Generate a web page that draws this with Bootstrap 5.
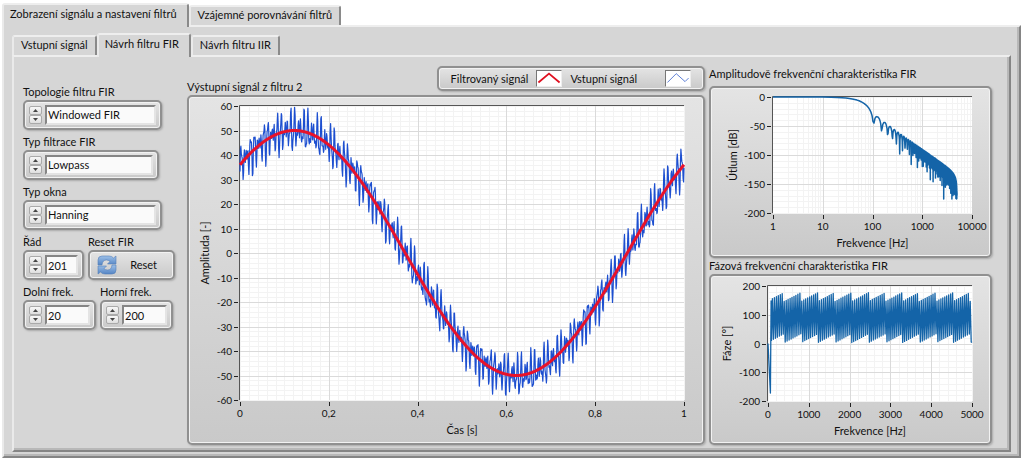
<!DOCTYPE html>
<html lang="cs">
<head>
<meta charset="utf-8">
<meta name="viewport" content="width=device-width, initial-scale=1">
<title>Filtry FIR a IIR</title>
<link rel="stylesheet" href="https://cdn.jsdelivr.net/npm/bootstrap@5.3.0/dist/css/bootstrap.min.css">
<style>
body{font:11px/16px Lato,"Noto Sans",sans-serif;color:#111;background:#fff}
.app-frame,.inner-frame{background:#d6d6d6;border:2px solid;border-color:#eee #858585 #858585 #eaeaea;box-shadow:inset -2px -2px #b8b8b8}
.app-frame{margin:0 2px 1px}
.inner-frame{margin:0 8px 4px 8px;padding:9px 17px 5px 9px}
.panel-tabs{padding:3px 2px 0}
.inner-tabs{padding:6px 8px 0}
.panel-tab{border:2px solid;border-color:#eee #8a8a8a transparent #eaeaea;border-bottom:0;background:#d6d6d6;border-radius:3px 3px 0 0;padding:0 7px 2px;height:20px;white-space:nowrap;color:#111;line-height:16px}
.panel-tab.active{height:24px;margin-bottom:-2px;position:relative;padding:0 10px 5px 6px}
.controls-col{width:164px;padding-top:18px;row-gap:4px}
.side-col{width:283px}
.signal-col{min-width:0}
.bevel{border:2px solid #909090;border-radius:5px;background:linear-gradient(#e4e4e4,#c9c9c9);box-shadow:inset 0 0 0 1px #f2f2f2,1px 1px 2px #aaa}
.chart-card{flex:1 1 0;min-height:165px}
.pick{height:30px;padding:3px 4px;column-gap:3px}
.pick-wide{width:139px}
.pick-mid{width:136px}
.pick-num{width:73px}
.pick-order{width:61px}
.spin-btn{width:13px;height:9px;border:1px solid #aaa;border-radius:2px;background:linear-gradient(#f8f8f8,#dedede)}
.spin-btn svg{width:5px;height:3px}
.value-box{border:2px solid;border-color:#858585 #e4e4e4 #e4e4e4 #858585;background:#fafafa;min-width:0;width:100%;height:20px;line-height:16px;padding:0 1px;appearance:none;border-radius:0;color:#111}
.reset-btn{height:30px;width:87px;padding:0 16px 0 6px;color:#111}
.legend-bar{height:25px;padding:0 12px}
.legend-key{width:26px;height:17px;background:#fff;border:1px solid;border-color:#777 #eee #eee #777}
.plot-box{overflow:hidden;min-width:0}
.plot-box svg{display:block}
.plot-box text{font-size:11px;fill:#111}
.plot-box .tick-text{font-size:10px}
.curve{fill:none;stroke-linejoin:round}
</style>
</head>
<body class="min-vh-100 d-flex flex-column">
<nav class="panel-tabs d-flex align-items-end" aria-label="Hlavní záložky">
<button type="button" class="panel-tab active">Zobrazení signálu a nastavení filtrů</button>
<button type="button" class="panel-tab">Vzájemné porovnávání filtrů</button>
</nav>
<main class="app-frame flex-fill d-flex flex-column">
<nav class="inner-tabs d-flex align-items-end" aria-label="Záložky filtru">
<button type="button" class="panel-tab">Vstupní signál</button>
<button type="button" class="panel-tab active">Návrh filtru FIR</button>
<button type="button" class="panel-tab">Návrh filtru IIR</button>
</nav>
<div class="inner-frame flex-fill d-flex">
<form class="controls-col flex-shrink-0 d-flex flex-column">
  <div>
    <label class="d-block" for="topology">Topologie filtru FIR</label>
    <div class="bevel pick pick-wide d-flex align-items-center" data-spin>
      <select class="value-box" id="topology"><option>Windowed FIR</option></select>
    </div>
  </div>
  <div>
    <label class="d-block" for="kind">Typ filtrace FIR</label>
    <div class="bevel pick pick-mid d-flex align-items-center" data-spin>
      <select class="value-box" id="kind"><option>Lowpass</option></select>
    </div>
  </div>
  <div>
    <label class="d-block" for="win">Typ okna</label>
    <div class="bevel pick pick-wide d-flex align-items-center" data-spin>
      <select class="value-box" id="win"><option>Hanning</option></select>
    </div>
  </div>
  <div class="d-flex">
    <div class="me-1">
      <label class="d-block" for="order">Řád</label>
      <div class="bevel pick pick-order d-flex align-items-center" data-spin>
        <input class="value-box" id="order" type="text" value="201">
      </div>
    </div>
    <div>
      <label class="d-block" for="reset">Reset FIR</label>
      <button type="button" class="bevel reset-btn d-flex align-items-center justify-content-between" id="reset">
        <svg width="22" height="20" viewBox="0 0 22 20" aria-hidden="true">
          <defs><linearGradient id="blue" x2="0" y2="1"><stop stop-color="#9dc0e8"/><stop offset="1" stop-color="#5585c4"/></linearGradient></defs>
          <path d="M2 10V5Q2 1 6 1H13Q16 1 17.500 3L20 1V9H11.500L14 6.500Q12.500 5 10.500 5Q6.500 5 6 10Z" fill="url(#blue)" stroke="#5580b8" stroke-width=".6"/>
          <path d="M20 10V15Q20 19 16 19H9Q6 19 4.500 17L2 19V11H10.500L8 13.500Q9.500 15 11.500 15Q15.500 15 16 10Z" fill="url(#blue)" stroke="#5580b8" stroke-width=".6"/>
        </svg>
        <span>Reset</span>
      </button>
    </div>
  </div>
  <div class="d-flex gap-1">
    <div>
      <label class="d-block" for="low">Dolní frek.</label>
      <div class="bevel pick pick-num d-flex align-items-center" data-spin>
        <input class="value-box" id="low" type="text" value="20">
      </div>
    </div>
    <div>
      <label class="d-block" for="high">Horní frek.</label>
      <div class="bevel pick pick-num d-flex align-items-center" data-spin>
        <input class="value-box" id="high" type="text" value="200">
      </div>
    </div>
  </div>
</form>
<section class="signal-col flex-fill d-flex flex-column">
  <div class="d-flex align-items-end justify-content-between">
    <span>Výstupní signál z filtru 2</span>
    <div class="bevel legend-bar d-flex align-items-center mb-1">
      <span>Filtrovaný signál</span>
      <svg class="legend-key mx-2" viewBox="0 0 26 17" aria-hidden="true"><path d="M1 13 13 3 25 13" fill="none" stroke="#e01020" stroke-width="2"/></svg>
      <span class="me-1">Vstupní signál</span>
      <svg class="legend-key ms-4" viewBox="0 0 26 17" aria-hidden="true"><path d="M1 13 11 3 21 12 25 8" fill="none" stroke="#4a6fd0"/></svg>
    </div>
  </div>
  <div class="bevel chart-card d-flex"><div class="plot-box flex-fill" id="signal"></div></div>
</section>
<section class="side-col flex-shrink-0 d-flex flex-column ms-1">
  <span>Amplitudově frekvenční charakteristika FIR</span>
  <div class="bevel chart-card d-flex mt-1"><div class="plot-box flex-fill" id="gain"></div></div>
  <span>Fázová frekvenční charakteristika FIR</span>
  <div class="bevel chart-card d-flex"><div class="plot-box flex-fill" id="phase"></div></div>
</section>
</div>
</main>
<script src="https://cdn.jsdelivr.net/npm/bootstrap@5.3.0/dist/js/bootstrap.bundle.min.js"></script>
<script>
document.querySelectorAll('[data-spin]').forEach(box => {
  const arrow = (d, name) => `<button type="button" class="spin-btn p-0 d-flex align-items-center justify-content-center" aria-label="${name}"><svg viewBox="0 0 5 3"><path d="${d}" fill="#444"/></svg></button>`;
  box.insertAdjacentHTML('afterbegin', `<div class="d-flex flex-column">${arrow('M0 3 2.500 0 5 3Z', 'Zvýšit')}${arrow('M0 0 2.500 3 5 0Z', 'Snížit')}</div>`);
});

const range = (a, b, s) => Array.from({length: Math.round((b - a) / s) + 1}, (_, i) => a + i * s);

// Signal: one sine period, plus a ripple made of two close tones and a faster one
const clean = t => 50 * Math.sin(2 * Math.PI * t + 0.804);
const noisy = t => clean(t) - 8 * Math.cos(2 * Math.PI * 116.5 * (t - .1185)) * Math.cos(2 * Math.PI * 16.65 * (t - .1185)) + 3 * Math.sin(2 * Math.PI * 237 * t);
const times = range(0, 1, 0.001);

// Magnitude of a 201-tap Hann-windowed low-pass at 10 kHz sampling
const taps = range(-100, 100, 1).map(n => (n ? Math.sin(2 * Math.PI * n * .002) / (Math.PI * n) : .004) * (.5 + .5 * Math.cos(Math.PI * n / 100)));
const total = taps.reduce((a, b) => a + b);
const gain = [[1, 0]].concat(range(1, 1023, 1).map(k => {
  const f = k * 10000 / 2048;
  const h = taps.reduce((a, c, i) => a + c * Math.cos(2 * Math.PI * f / 10000 * (i - 100)), 0) / total;
  return [f, Math.max(-176, 20 * Math.log10(Math.abs(h) + 1e-12))];
}));

// Wrapped phase: fast swings whose limits climb in blocks of about 414 Hz
const phase = [[0, 0], [60, -172], [75, 148]];
for (let i = 0, f = 85; f < 4990; f += 24, i++) {
  const block = ((f + 20) % 414) / 414;
  phase.push([f, (i % 2 ? 146 : 3) + 31 * block]);
}
phase.push([5000, 3]);

const charts = [
  {id: 'signal', pad: [9, 19, 43, 51], x: [0, 1], y: [-60, 60], xt: range(0, 1, .2), yt: range(-60, 60, 10), xm: range(0, 1, .02), ym: range(-60, 60, 2),
   xl: 'Čas [s]', yl: 'Amplituda [-]', ylx: 20, fmt: v => String(Math.round(v * 10) / 10).replace('.', ','),
   curves: [['#1d4fd0', 1.200, times.map(t => [t, noisy(t)])], ['#e8122a', 3, times.map(t => [t, clean(t)])]]},
  {id: 'gain', pad: [9, 18, 43, 62], x: [1, 10000], y: [-200, 0], log: true, xt: [1, 10, 100, 1000, 10000], yt: range(-200, 0, 50),
   xm: [1, 10, 100, 1000].flatMap(d => range(2, 9, 1).map(k => k * d)), ym: range(-200, 0, 10), xl: 'Frekvence [Hz]', yl: 'Útlum [dB]', ylx: 26, fmt: String,
   curves: [['#1464a8', 1.500, gain]]},
  {id: 'phase', pad: [10, 18, 43, 57], x: [0, 5000], y: [-200, 200], xt: range(0, 5000, 1000), yt: range(-200, 200, 100), xm: range(0, 5000, 200), ym: range(-200, 200, 20),
   xl: 'Frekvence [Hz]', yl: 'Fáze [°]', ylx: 20, fmt: String, curves: [['#1464a8', 1.300, phase]]}
];

function draw(c) {
  const box = document.getElementById(c.id), W = box.clientWidth, H = box.clientHeight;
  const [t, r, b, l] = c.pad, s = v => c.log ? Math.log10(v) : v;
  const X = v => l + (s(v) - s(c.x[0])) / (s(c.x[1]) - s(c.x[0])) * (W - l - r);
  const Y = v => t + (c.y[1] - v) / (c.y[1] - c.y[0]) * (H - t - b);
  const px = v => Math.round(v) + .5, bot = H - b, right = W - r;
  const vline = (v, col) => `<path d="M${px(X(v))} ${t}V${bot}" stroke="${col}"/>`;
  const hline = (v, col) => `<path d="M${l} ${px(Y(v))}H${right}" stroke="${col}"/>`;
  let o = `<rect x="${l}" y="${t}" width="${right - l}" height="${bot - t}" fill="#fff"/>`;
  c.xm.forEach(v => o += vline(v, '#f3f3f3'));
  c.ym.forEach(v => o += hline(v, '#f3f3f3'));
  c.xt.slice(1, -1).forEach(v => o += vline(v, '#dadada'));
  c.yt.slice(1, -1).forEach(v => o += hline(v, '#dadada'));
  o += `<path d="M${l - .5} ${bot}V${t - .5}H${right}" fill="none" stroke="#555"/>`;
  c.curves.forEach(([col, w, pts]) => o += `<polyline class="curve" stroke="${col}" stroke-width="${w}" points="${pts.map(p => X(p[0]).toFixed(1) + ',' + Y(p[1]).toFixed(1)).join(' ')}"/>`);
  c.xt.forEach(v => o += `<path d="M${px(X(v))} ${bot + 2}v4" stroke="#222"/><text class="tick-text" text-anchor="middle" x="${X(v)}" y="${bot + 17}">${c.fmt(v)}</text>`);
  c.yt.forEach(v => o += `<path d="M${l - 6} ${px(Y(v))}h4" stroke="#222"/><text class="tick-text" text-anchor="end" x="${l - 8}" y="${Y(v) + 4}">${c.fmt(v)}</text>`);
  const mid = (t + bot) / 2;
  o += `<text text-anchor="middle" x="${(l + right) / 2}" y="${bot + 34}">${c.xl}</text>`;
  o += `<text text-anchor="middle" transform="translate(${c.ylx} ${mid}) rotate(-90)">${c.yl}</text>`;
  box.innerHTML = `<svg width="${W}" height="${H}" role="img" aria-label="${c.yl}">${o}</svg>`;
}
function drawAll() {
  charts.forEach(c => document.getElementById(c.id).innerHTML = '');
  charts.forEach(draw);
}
drawAll();
addEventListener('resize', drawAll);
</script>
</body>
</html>
